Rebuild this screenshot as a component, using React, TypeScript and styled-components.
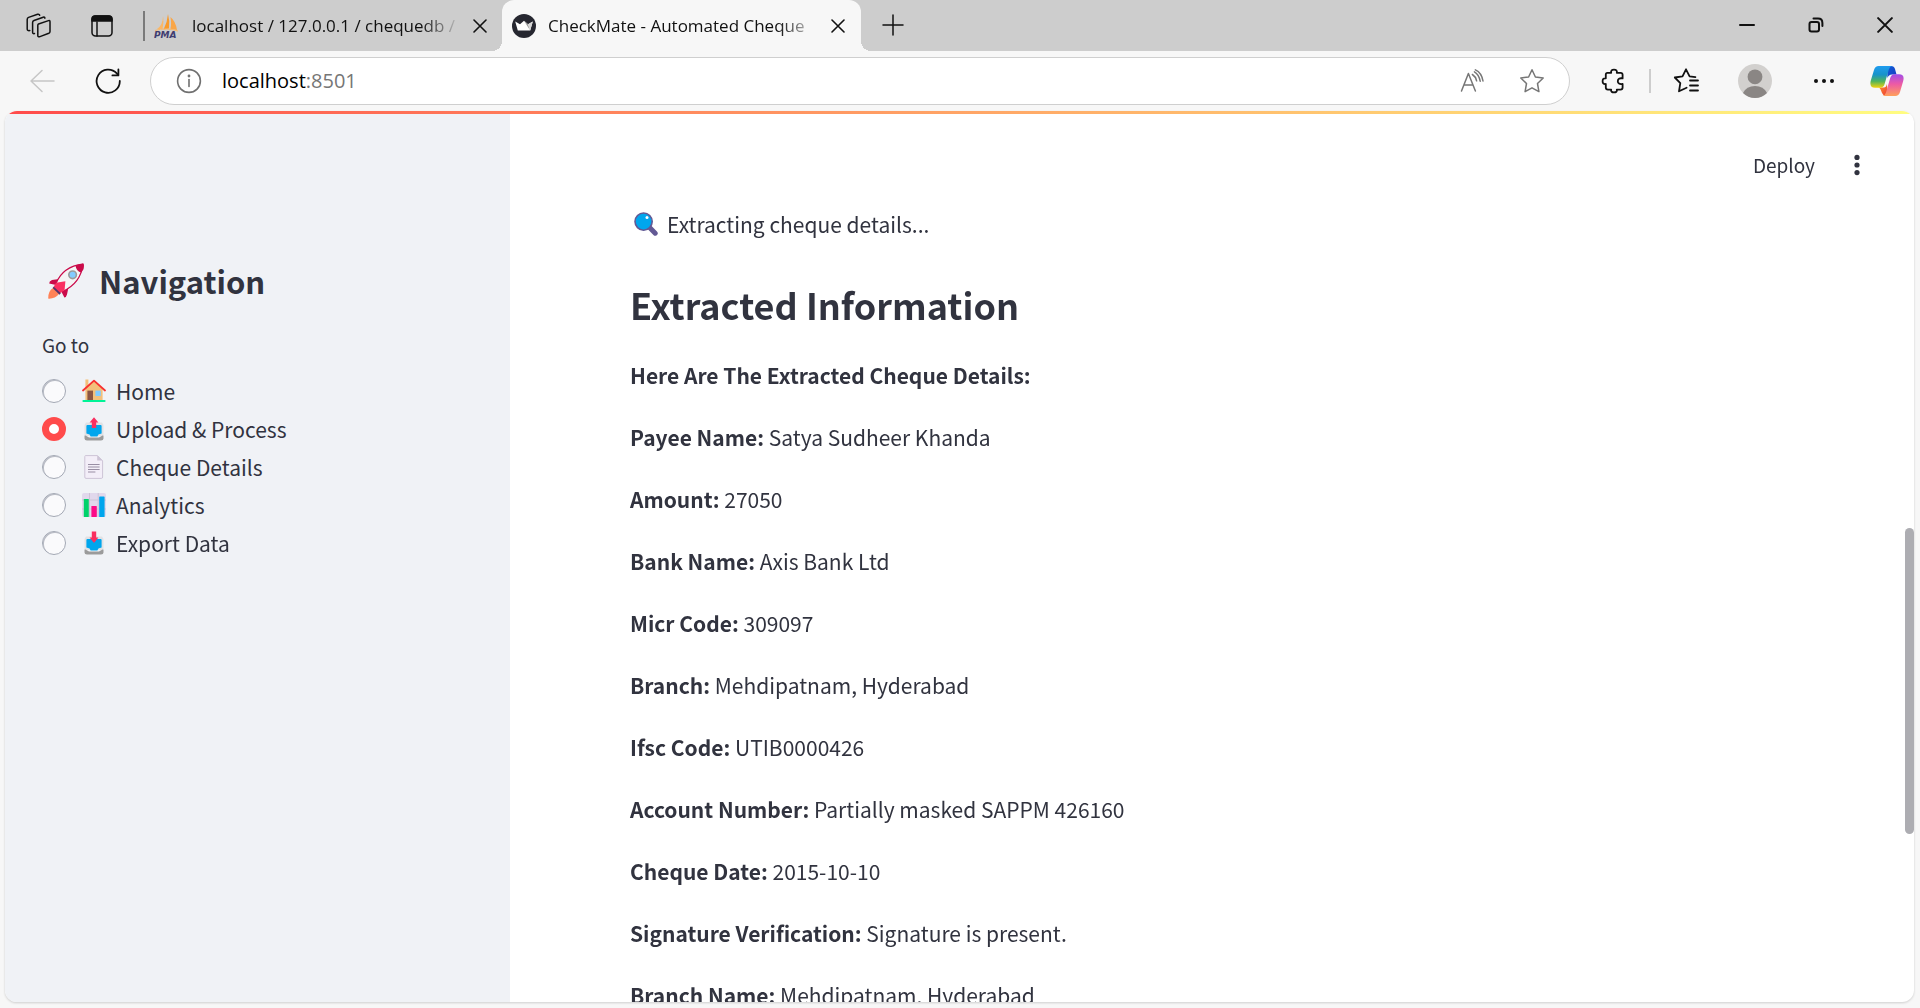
import React, { useState } from "react";
import styled, { createGlobalStyle, css } from "styled-components";

const sans = `"Noto Sans CJK SC", "Noto Sans CJK JP", sans-serif`;
const chromeFont = `"Open Sans", "Noto Sans", sans-serif`;

const GlobalStyle = createGlobalStyle`
  *, *::before, *::after { box-sizing: border-box; }
  body { margin: 0; background: #f7f7f7; color: #31333f; font-family: ${sans}; }
  button { border: 0; padding: 0; background: none; color: inherit; font: inherit; cursor: pointer; }
  h1, h2, p { margin: 0; }
  svg { display: block; flex: none; }
`;

const Window = styled.div`
  display: flex;
  flex-direction: column;
  height: 100vh;
  overflow: hidden;
`;

const TabStrip = styled.header`
  display: flex;
  flex: none;
  height: 51px;
  background: #cdcdcd;
  color: #111;
  font-family: ${chromeFont};
  font-size: 17px;
`;

const StripTools = styled.div`
  display: flex;
  align-items: center;
  gap: 38px;
  padding: 0 29px 0 26px;
`;

const IconButton = styled.button<{ $w?: number; $h?: number; $color?: string }>`
  display: flex;
  align-items: center;
  justify-content: center;
  flex: none;
  width: ${(p) => p.$w ?? 24}px;
  height: ${(p) => p.$h ?? 32}px;
  color: ${(p) => p.$color ?? "#111"};
`;

const Divider = styled.span<{ $h: number; $color: string }>`
  flex: none;
  width: 2px;
  height: ${(p) => p.$h}px;
  align-self: center;
  background: ${(p) => p.$color};
`;

const Tab = styled.div<{ $active?: boolean }>`
  display: flex;
  align-items: center;
  gap: 12px;
  width: 357px;
  height: 51px;
  padding: 0 15px 0 9px;
  ${(p) =>
    p.$active &&
    css`
      position: relative;
      width: 359px;
      padding: 0 16px 0 10px;
      background: #f7f7f7;
      border-radius: 12px 12px 0 0;
      &::before,
      &::after {
        content: "";
        position: absolute;
        bottom: 0;
        width: 10px;
        height: 10px;
      }
      &::before {
        right: 100%;
        background: radial-gradient(circle at 0 0, #cdcdcd 10px, #f7f7f7 10px);
      }
      &::after {
        left: 100%;
        background: radial-gradient(circle at 100% 0, #cdcdcd 10px, #f7f7f7 10px);
      }
    `}
`;

const TabTitle = styled.span`
  flex: 1;
  min-width: 0;
  white-space: nowrap;
  line-height: 24px;
  mask-image: linear-gradient(to right, #000 calc(100% - 40px), transparent);
`;

const WindowButtons = styled.div`
  display: flex;
  gap: 45px;
  margin-left: auto;
  padding: 9px 23px 0 0;
`;

const Toolbar = styled.nav`
  display: flex;
  align-items: center;
  flex: none;
  height: 60px;
  padding: 0 16px 0 29px;
  font-family: ${chromeFont};
`;

const NavButtons = styled.div`
  display: flex;
  gap: 40px;
  padding-right: 29px;
`;

const AddressBar = styled.div`
  display: flex;
  align-items: center;
  flex: 1;
  height: 48px;
  padding: 0 24px 0 25px;
  gap: 20px;
  background: #fff;
  border: 1px solid #cfcfcf;
  border-radius: 24px;
`;

const Address = styled.a`
  flex: 1;
  color: #767676;
  font-size: 20px;
  line-height: 28px;
  text-decoration: none;
  span { color: #000; }
`;

const AddressTools = styled.div`
  display: flex;
  gap: 35px;
`;

const BrowserTools = styled.div`
  display: flex;
  align-items: center;
  padding-left: 31px;
  gap: 22px;
`;

const Profile = styled.div`
  display: flex;
  align-items: center;
  gap: 34px;
  padding-left: 11px;
`;

const Page = styled.div`
  position: relative;
  display: flex;
  flex-direction: column;
  flex: 1;
  min-height: 0;
  margin: 0 6px 6px 5px;
  overflow: hidden;
  background: #fff;
  border-radius: 12px;
`;

const PageShadow = styled.div`
  display: flex;
  flex: 1;
  flex-direction: column;
  min-height: 0;
  filter: drop-shadow(0 1px 1px rgba(0, 0, 0, 0.16));
`;

const Decoration = styled.div`
  flex: none;
  height: 3px;
  background: linear-gradient(90deg, #ff4b4b, #fffd80);
`;

const Columns = styled.div`
  display: flex;
  flex: 1;
  min-height: 0;
`;

const Sidebar = styled.aside`
  flex: none;
  width: 505px;
  padding: 143px 37px 24px;
  background: #f0f2f6;
`;

const SidebarTitle = styled.h2`
  display: flex;
  align-items: center;
  gap: 15px;
  padding-left: 6px;
  font-size: 31px;
  font-weight: 600;
  line-height: 48px;
`;

const RadioGroup = styled.fieldset`
  display: flex;
  flex-direction: column;
  margin: 0;
  padding: 0;
  border: 0;
`;

const RadioLegend = styled.legend`
  padding: 24px 0 11px;
  font-size: 19px;
  line-height: 32px;
`;

const RadioRow = styled.label`
  display: flex;
  align-items: center;
  height: 38px;
  font-size: 21px;
  line-height: 38px;
  cursor: pointer;
`;

const Radio = styled.input`
  appearance: none;
  flex: none;
  width: 24px;
  height: 24px;
  margin: 0 16px 0 0;
  border: 1px solid #a3a8b4;
  border-radius: 50%;
  background: #fafafc;
  box-shadow: inset 1px 1px 0 #b9bcc5;
  &:checked {
    border: 7px solid #ff4b4b;
    background: #fff;
    box-shadow: none;
  }
`;

const EmojiSlot = styled.span`
  display: flex;
  width: 34px;
`;

const Main = styled.main`
  flex: 1;
  min-width: 0;
  overflow: hidden;
`;

const AppBar = styled.div`
  display: flex;
  align-items: center;
  justify-content: flex-end;
  gap: 33px;
  height: 91px;
  padding: 10px 48px 0 0;
`;

const DeployButton = styled.button`
  font-size: 19px;
  line-height: 32px;
`;

const Content = styled.section`
  padding: 0 120px;
`;

const Status = styled.p`
  display: flex;
  align-items: center;
  gap: 9px;
  padding-left: 4px;
  font-size: 21px;
  line-height: 38px;
`;

const Title = styled.h1`
  padding: 36px 0 27px;
  font-size: 36px;
  font-weight: 600;
  line-height: 50px;
`;

const Details = styled.div`
  display: flex;
  flex-direction: column;
  gap: 24px;
`;

const Detail = styled.p`
  font-size: 21px;
  line-height: 38px;
  strong { font-weight: 600; }
`;

const ScrollThumb = styled.div`
  position: absolute;
  top: 417px;
  right: 0;
  width: 9px;
  height: 306px;
  border-radius: 5px;
  background: #adadb2;
`;

type IconProps = { children: React.ReactNode; size?: number; sw?: number; box?: number };
const Line = ({ children, size = 24, sw = 1.5, box = 24 }: IconProps) => (
  <svg width={size} height={size} viewBox={`0 0 ${box} ${box}`} fill="none" stroke="currentColor" strokeWidth={sw} strokeLinecap="round" strokeLinejoin="round" aria-hidden="true">
    {children}
  </svg>
);

const Workspaces = () => (
  <Line size={26} box={26}>
    <path d="M12.5 11 22.5 7.6Q24 7.2 24 8.8V18.5Q24 19.8 22.8 20.3L14 23.6Q11.8 24.4 11.8 22.4V12.6Q11.8 11.3 12.5 11Z" />
    <path d="M8.5 20.6Q6.6 21 6.6 19.2V9.4Q6.6 8 8 7.5L17.2 4.2Q18.7 3.8 18.9 5.2" />
    <path d="M3.8 17.6Q1.2 18 1.2 16V6.4Q1.2 5 2.6 4.4L11.6 1.3Q13.3 .9 13.7 2.3" />
  </Line>
);
const VerticalTabs = () => (
  <Line size={24}>
    <rect x="2" y="2" width="20" height="20" rx="3.5" />
    <path d="M2 7V5Q2 2 5 2H19Q22 2 22 5V7Z" fill="currentColor" />
    <path d="M7 8V22" />
  </Line>
);
const Close = ({ size = 14, sw = 1.6 }: { size?: number; sw?: number }) => (
  <Line size={size} box={14} sw={sw}><path d="M1 1 13 13M13 1 1 13" /></Line>
);
const Plus = () => <Line size={22} box={22}><path d="M11 1V21M1 11H21" /></Line>;
const Minimize = () => <Line size={16} box={16} sw={2}><path d="M1 8H15" /></Line>;
const Restore = () => (
  <Line size={16} box={16} sw={2}>
    <rect x="1.5" y="5" width="9.5" height="9.5" rx="2" />
    <path d="M5.5 1.6H10Q14.4 1.6 14.4 6V9" />
  </Line>
);
const Back = () => <Line size={26} box={26}><path d="M25 13H2M13 2.5 2 13 13 23.5" /></Line>;
const Reload = () => (
  <Line size={26} box={26} sw={1.8}>
    <path d="M24.8 13A11.6 11.6 0 1 1 21.8 5.4L23 6.8" />
    <path d="M23.4 1.5V7.4H17.4" />
  </Line>
);
const Info = () => (
  <Line size={26} box={26} sw={1.6}>
    <circle cx="13" cy="13" r="11.4" /><path d="M13 11.5V18.5" /><circle cx="13" cy="8" r=".6" fill="currentColor" />
  </Line>
);
const ReadAloud = () => (
  <Line size={24}>
    <path d="M1.5 22 8.4 4.5 15.4 22M4 16H13" /><path d="M12.4 5.5Q15.6 7.5 16.6 11.8M14.4 2.8Q19 5.4 20.2 12.2M15.4 .9Q21.6 3.6 23 12" />
  </Line>
);
const Star = () => (
  <Line size={26} box={26}>
    <path d="M13 1.8 16.4 9 24.2 10 18.5 15.5 19.9 23.6 13 19.8 6.1 23.6 7.5 15.5 1.8 10 9.6 9Z" />
  </Line>
);
const Puzzle = () => (
  <Line size={26} box={26} sw={1.8}>
    <path d="M6.4 4.8H10.2C9.6 2.6 11 1.6 13 1.6S16.4 2.6 15.8 4.8H19.6Q21.6 4.8 21.6 6.8V10.4C18.4 9.8 16.8 11.2 16.8 13.2S18.4 16.6 21.6 16V19.6Q21.6 21.6 19.6 21.6H15.8C16.4 23.6 15 24.4 13 24.4S9.6 23.6 10.2 21.6H6.8Q4.8 21.6 4.8 19.6V16C2.4 16.4 1.6 15 1.6 13.2S2.4 10 4.8 10.4V6.6Q4.8 4.8 6.4 4.8Z" />
  </Line>
);
const Favorites = () => (
  <Line size={26} box={26} sw={1.8}>
    <path d="M22.4 9.6 16.6 8.8 13 1.8 9.5 8.8 1.8 10 7.3 15.6 6 23.8 13.6 20.2M17 13H25M17 18H25M17 23H25" transform="translate(0 -.5)" />
  </Line>
);
const Avatar = () => (
  <svg width="34" height="34" viewBox="0 0 34 34" aria-hidden="true">
    <circle cx="17" cy="17" r="17" fill="#d2d0ce" />
    <circle cx="17" cy="12.8" r="7.4" fill="#8a8684" />
    <path d="M5 29Q8.5 22 17 22T29 29A17 17 0 0 1 5 29Z" fill="#8a8684" />
  </svg>
);
const More = () => (
  <svg width="22" height="6" viewBox="0 0 22 6" fill="currentColor" aria-hidden="true">
    <circle cx="3" cy="3" r="2" /><circle cx="11" cy="3" r="2" /><circle cx="19" cy="3" r="2" />
  </svg>
);
const Kebab = () => (
  <svg width="6" height="22" viewBox="0 0 6 22" fill="currentColor" aria-hidden="true">
    <circle cx="3" cy="3.4" r="2.6" /><circle cx="3" cy="11" r="2.6" /><circle cx="3" cy="18.6" r="2.6" />
  </svg>
);
const Copilot = () => (
  <svg width="34" height="32" viewBox="0 0 34 32" aria-hidden="true">
    <defs>
      <linearGradient id="cpA" x1="0" y1="0" x2="0" y2="1"><stop offset="0" stopColor="#1f9cf0" /><stop offset=".4" stopColor="#1793c9" /><stop offset=".7" stopColor="#4fb45c" /><stop offset="1" stopColor="#f5d30b" /></linearGradient>
      <linearGradient id="cpB" x1="0" y1="0" x2="0" y2="1"><stop offset="0" stopColor="#a24de8" /><stop offset=".45" stopColor="#ed5aa5" /><stop offset="1" stopColor="#ffa05a" /></linearGradient>
      <linearGradient id="cpC" x1="0" y1="0" x2="1" y2="1"><stop offset="0" stopColor="#0f5fd8" /><stop offset="1" stopColor="#1a3bc0" /></linearGradient>
      <linearGradient id="cpD" x1="0" y1="0" x2="1" y2="1"><stop offset="0" stopColor="#ff9a2c" /><stop offset="1" stopColor="#ee3a36" /></linearGradient>
    </defs>
    <path d="M17 1H21Q24.2 1 25 4L26.5 9.4H22Q18.6 9.4 17.4 13Z" fill="url(#cpC)" />
    <path d="M8.4 22.5H14Q16 22.5 17 19L17.6 30.5Q13.4 31.6 12 28L10.6 24.6Q10 22.8 8.4 22.5Z" fill="url(#cpD)" />
    <path d="M8.6 1H22Q19.8 1.4 18.8 4.6L14.6 19Q13.5 22.8 10 22.8H5Q-1 22.8 .8 15.6L4 5Q5.2 1 8.6 1Z" fill="url(#cpA)" />
    <path d="M25.4 31H12.6Q15 30.4 16 27.4L20.2 13Q21.3 9.2 24.4 9.2H29Q35 9.2 33.2 16L30 27Q28.8 31 25.4 31Z" fill="url(#cpB)" />
  </svg>
);
const PmaLogo = () => (
  <svg width="26" height="26" viewBox="0 0 26 26" aria-hidden="true">
    <path d="M9 3Q9 12 3 16H8.5Q10 8 9 3Z" fill="#fbb765" />
    <path d="M14 1Q13.4 9 9.6 16.5L15 15.6Q16 8 14 1Z" fill="#f99a2a" />
    <path d="M16.4 4Q17.8 11 16.4 15.8L23 17Q21.6 8 16.4 4Z" fill="#f9a648" />
    <path d="M1 17.5Q12 14 24 18" stroke="#fbb765" fill="none" />
    <text x="0" y="24.6" fontFamily="DejaVu Sans" fontSize="9" fontWeight="700" fontStyle="italic" fill="#3f3d70">PMA</text>
  </svg>
);
const Crown = () => (
  <svg width="24" height="24" viewBox="0 0 24 24" aria-hidden="true">
    <circle cx="12" cy="12" r="12" fill="#262730" />
    <path d="M3.2 7.6 8 10.3 12 6.7 16 10.3 20.8 7.6 18.2 16.4H5.8Z" fill="#fff" />
    <path d="M12 6.7 16 10.3 18.2 16.4Z" fill="#999" /><path d="M20.8 7.6 16 10.3 18.2 16.4Z" fill="#d6d6d6" />
  </svg>
);

const Rocket = () => (
  <svg width="36" height="36" viewBox="0 0 36 36" aria-hidden="true">
    <path d="M5 25Q0 28 .2 35.6 7 36 11 31Z" fill="#ff8257" />
    <path d="M15 15.5 4 17Q1 18.4 1.2 20.4L8 22ZM21 22 19 31.5Q18 34.8 16.4 34.6L13 28Z" fill="#ca0b4a" />
    <path d="M8 20.5Q15 3.5 34.8 1.2 33 20 14.5 28.5Z" fill="#f4f4f4" stroke="#ca0b4a" strokeWidth="1.3" />
    <path d="M27.6 2.4 35 .4Q36.6 1 35.6 6L33.4 9.6Q28 8 27.6 2.4Z" fill="#ca0b4a" />
    <path d="M5 25 8 19.8 17.4 18.2 16.6 27 11 31Z" fill="#f92f60" />
    <path d="M5.2 24.4 12.2 31" stroke="#533566" strokeWidth="1.8" />
    <circle cx="24.6" cy="11.8" r="3.8" fill="#83cbff" stroke="#9b9b9b" strokeWidth="1.6" />
  </svg>
);
const House = () => (
  <svg width="24" height="24" viewBox="0 0 24 24" aria-hidden="true">
    <path d="M3.4.6H6.4V6L12 2 20.6 10V21.6H3.4Z" fill="#f3c07b" />
    <path d="M1 11.5 12 1.6 23 11.5" fill="none" stroke="#f8312f" strokeWidth="1.8" strokeLinecap="round" strokeLinejoin="round" />
    <path d="M5.4 11.6H11V21.6H5.4Z" fill="#8c5543" /><path d="M13.4 11.6H18.8V17H13.4Z" fill="#83cbff" />
    <rect x=".4" y="21" width="23.2" height="2" rx="1" fill="#00f397" />
  </svg>
);
const Tray = ({ down }: { down?: boolean }) => (
  <svg width="24" height="24" viewBox="0 0 24 24" aria-hidden="true">
    <path d="M4 5.6H20L21.5 8V19H2.5V8Z" fill="#e1e1e4" />
    <path d="M2.5 19Q2.5 18.2 3.5 18.6L7 20.4H17L20.5 18.6Q21.5 18.2 21.5 19V21.5Q21.5 23.6 19 23.6H5Q2.5 23.6 2.5 21.5Z" fill="#9b9b9b" />
    <path d="M5.4 8H18.6Q19.6 8 19.6 9V16.6L16.4 17.4 15.4 19.4H8.6L7.6 17.4 4.4 16.6V9Q4.4 8 5.4 8Z" fill="#00a6ed" />
    <path d={down ? "M9.8.6H14.2V6.6H16.4L12 12 7.6 6.6H9.8Z" : "M9.8 11H14.2V5.4H16.4L12 .2 7.6 5.4H9.8Z"} fill="#f92f60" />
  </svg>
);
const Sheet = () => (
  <svg width="24" height="24" viewBox="0 0 24 24" aria-hidden="true">
    <path d="M3.4.6H15.5L20.6 5.8V22Q20.6 23.4 19.4 23.4H4Q2.8 23.4 2.8 22V1.6Q2.8.6 3.4.6Z" fill="#f3eef8" stroke="#cdc4d6" />
    <path d="M15.2.6V5.6H20.6Z" fill="#cdc4d6" />
    <path d="M6 9.5H17.6M6 12H17.6M6 14.5H17.6M6 17H13.4" stroke="#998ea4" />
  </svg>
);
const Chart = () => (
  <svg width="24" height="24" viewBox="0 0 24 24" aria-hidden="true">
    <rect width="24" height="24" rx="2" fill="#e1d8ec" />
    <path d="M0 7H24M0 16H24M7.5 0V24M16.2 0V24" stroke="#cdc4d6" />
    <rect x="1.8" y="6" width="5" height="18" rx=".6" fill="#00d26a" />
    <rect x="9.4" y="13" width="5.4" height="11" rx=".6" fill="#fc0a87" />
    <rect x="17.2" y="3.4" width="5.4" height="20.6" rx=".6" fill="#00a6ed" />
  </svg>
);
const Magnifier = () => (
  <svg width="24" height="24" viewBox="0 0 24 24" aria-hidden="true">
    <path d="M14.6 14.6 21.2 21.2" stroke="#635994" strokeWidth="5" strokeLinecap="round" />
    <circle cx="9.6" cy="9.6" r="8.6" fill="#00a6ed" stroke="#635994" strokeWidth="1.6" />
    <circle cx="13" cy="5.6" r="1.5" fill="#fff" />
  </svg>
);

const pages = [
  { name: "Home", icon: <House /> },
  { name: "Upload & Process", icon: <Tray /> },
  { name: "Cheque Details", icon: <Sheet /> },
  { name: "Analytics", icon: <Chart /> },
  { name: "Export Data", icon: <Tray down /> },
];

const details: [string, string][] = [
  ["Here Are The Extracted Cheque Details:", ""],
  ["Payee Name:", "Satya Sudheer Khanda"],
  ["Amount:", "27050"],
  ["Bank Name:", "Axis Bank Ltd"],
  ["Micr Code:", "309097"],
  ["Branch:", "Mehdipatnam, Hyderabad"],
  ["Ifsc Code:", "UTIB0000426"],
  ["Account Number:", "Partially masked SAPPM 426160"],
  ["Cheque Date:", "2015-10-10"],
  ["Signature Verification:", "Signature is present."],
  ["Branch Name:", "Mehdipatnam, Hyderabad"],
];

export default function App() {
  const [page, setPage] = useState("Upload & Process");
  return (
    <Window>
      <GlobalStyle />
      <TabStrip>
        <StripTools>
          <IconButton $w={26} aria-label="Workspaces"><Workspaces /></IconButton>
          <IconButton aria-label="Tab actions"><VerticalTabs /></IconButton>
        </StripTools>
        <Divider $h={30} $color="#7a7a7a" />
        <Tab>
          <PmaLogo />
          <TabTitle>localhost / 127.0.0.1 / chequedb /</TabTitle>
          <IconButton $w={14} aria-label="Close tab"><Close /></IconButton>
        </Tab>
        <Tab $active>
          <Crown />
          <TabTitle>CheckMate - Automated Cheque</TabTitle>
          <IconButton $w={14} aria-label="Close tab"><Close /></IconButton>
        </Tab>
        <IconButton $w={64} $h={50} aria-label="New tab"><Plus /></IconButton>
        <WindowButtons>
          <IconButton aria-label="Minimize"><Minimize /></IconButton>
          <IconButton aria-label="Restore"><Restore /></IconButton>
          <IconButton aria-label="Close"><Close size={16} sw={1.8} /></IconButton>
        </WindowButtons>
      </TabStrip>
      <Toolbar>
        <NavButtons>
          <IconButton $w={26} $color="#c6c6c6" aria-label="Back"><Back /></IconButton>
          <IconButton $w={26} aria-label="Reload"><Reload /></IconButton>
        </NavButtons>
        <AddressBar>
          <IconButton $w={26} $color="#707070" aria-label="Site information"><Info /></IconButton>
          <Address href="#"><span>localhost</span>:8501</Address>
          <AddressTools>
            <IconButton $color="#767676" aria-label="Read aloud"><ReadAloud /></IconButton>
            <IconButton $w={26} $color="#767676" aria-label="Add to favorites"><Star /></IconButton>
          </AddressTools>
        </AddressBar>
        <BrowserTools>
          <IconButton $w={26} aria-label="Extensions"><Puzzle /></IconButton>
          <Divider $h={24} $color="#cdcdcd" />
          <IconButton $w={26} aria-label="Favorites"><Favorites /></IconButton>
          <Profile>
            <IconButton $w={46} aria-label="Profile"><Avatar /></IconButton>
            <IconButton aria-label="Settings and more"><More /></IconButton>
            <IconButton $w={34} aria-label="Copilot"><Copilot /></IconButton>
          </Profile>
        </BrowserTools>
      </Toolbar>
      <PageShadow>
        <Page>
          <Decoration />
          <Columns>
            <Sidebar>
              <SidebarTitle><Rocket />Navigation</SidebarTitle>
              <RadioGroup>
                <RadioLegend>Go to</RadioLegend>
                {pages.map((p) => (
                  <RadioRow key={p.name}>
                    <Radio type="radio" name="page" checked={page === p.name} onChange={() => setPage(p.name)} />
                    <EmojiSlot>{p.icon}</EmojiSlot>
                    {p.name}
                  </RadioRow>
                ))}
              </RadioGroup>
            </Sidebar>
            <Main>
              <AppBar>
                <DeployButton>Deploy</DeployButton>
                <IconButton $w={18} $color="#31333f" aria-label="Menu"><Kebab /></IconButton>
              </AppBar>
              <Content>
                <Status><Magnifier />Extracting cheque details...</Status>
                <Title>Extracted Information</Title>
                <Details>
                  {details.map(([label, value]) => (
                    <Detail key={label}><strong>{label}</strong> {value}</Detail>
                  ))}
                </Details>
              </Content>
            </Main>
          </Columns>
          <ScrollThumb />
        </Page>
      </PageShadow>
    </Window>
  );
}
